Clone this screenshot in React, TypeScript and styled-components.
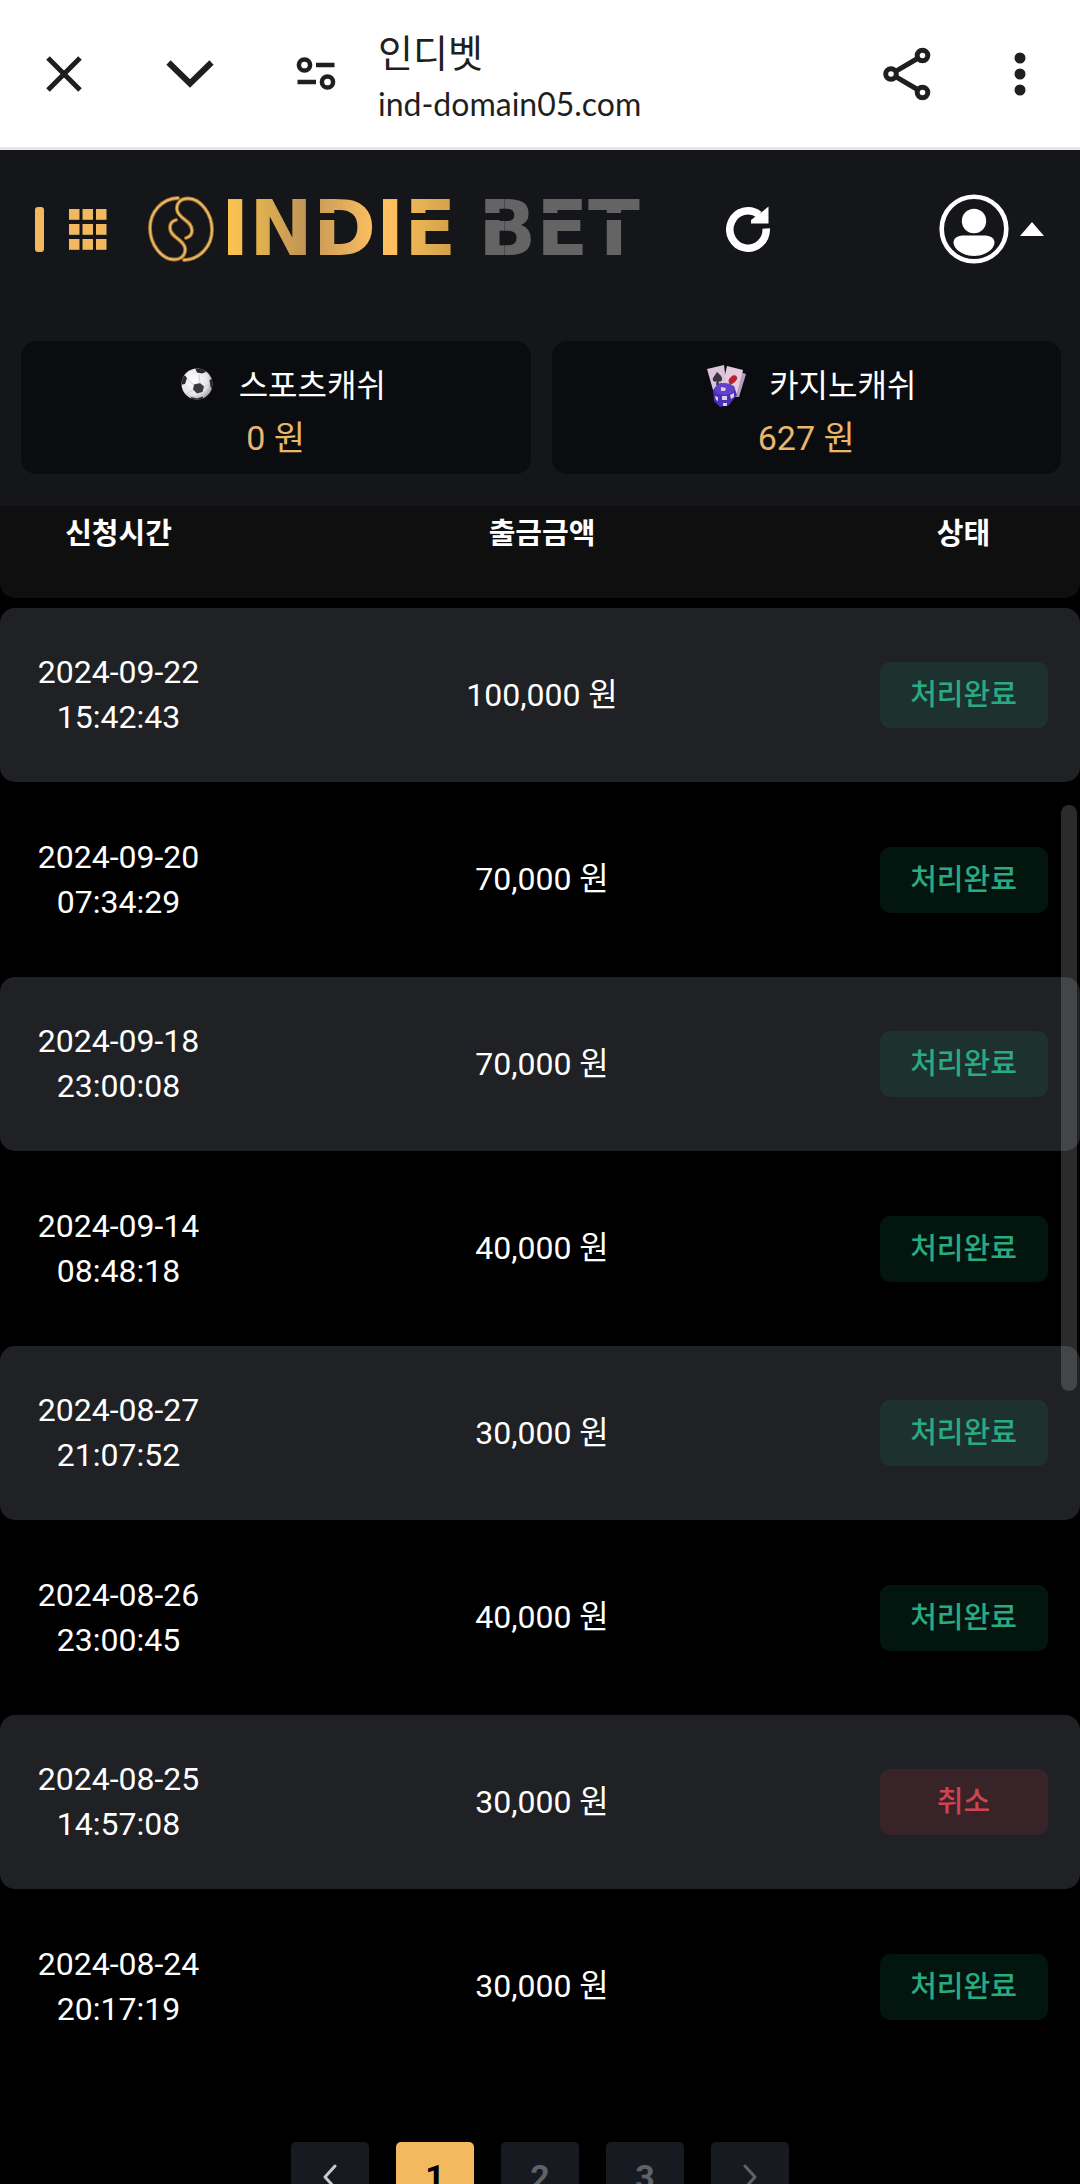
import React from "react";
import styled, { createGlobalStyle } from "styled-components";

const GlobalStyle = createGlobalStyle`
  *, *::before, *::after { box-sizing: border-box; }
  body {
    margin: 0;
    background: #000;
    color: #fff;
    font-family: Roboto, "Noto Sans CJK KR", sans-serif;
  }
  button {
    margin: 0;
    padding: 0;
    border: 0;
    background: none;
    color: inherit;
    font: inherit;
    cursor: pointer;
  }
  svg { display: block; flex: none; }
`;

const Screen = styled.div`
  position: relative;
  display: flex;
  flex-direction: column;
  height: 100vh;
  overflow: hidden;
`;

/* ---------- browser tab bar ---------- */

const TabBar = styled.header`
  display: flex;
  flex: none;
  align-items: center;
  height: 150px;
  padding: 0 24px 0 28px;
  background: #fff;
  border-bottom: 3px solid #e5e6e6;
  color: #1f1f1f;
`;

const BarButton = styled.button<{ $w: number }>`
  display: flex;
  flex: none;
  align-items: center;
  justify-content: center;
  width: ${(p) => p.$w}px;
  height: 72px;
`;

const PageInfo = styled.div`
  display: flex;
  flex: 1;
  flex-direction: column;
  min-width: 0;
  padding: 8px 0 0 26px;
`;

const PageTitle = styled.span`
  font-size: 38px;
  line-height: 52px;
`;

const PageUrl = styled.span`
  font-family: Lato, sans-serif;
  font-size: 32px;
  line-height: 48px;
`;

/* ---------- site header ---------- */

const SiteHeader = styled.header`
  flex: none;
  padding: 34px 19px 32px 21px;
  background: #15161a;
`;

const Toolbar = styled.div`
  display: flex;
  align-items: center;
  height: 90px;
  padding: 0 17px 0 14px;
  margin-bottom: 67px;
`;

const MenuButton = styled.button`
  display: flex;
  align-items: center;
  gap: 25px;
  color: #f1b85f;
`;

const MenuMark = styled.span`
  width: 9px;
  height: 45px;
  border-radius: 3px;
  background: currentColor;
`;

const Brand = styled.a`
  display: flex;
  align-items: center;
  margin-left: 41px;
  color: inherit;
  text-decoration: none;
`;

const Word = styled.span<{ $before: number }>`
  display: flex;
  margin-left: ${(p) => p.$before}px;
  font-family: "DejaVu Sans", sans-serif;
  font-size: 76px;
  font-weight: 700;
  line-height: 84px;
`;

const slot = "linear-gradient(#000 0 26px, transparent 26px 33px, #000 33px)";
const masks = {
  none: "none",
  full: slot,
  left: `${slot} left / 46% 100% no-repeat, linear-gradient(#000, #000) right / 54% 100% no-repeat`,
};

const Letter = styled.span<{ $from: string; $to: string; $cut: keyof typeof masks }>`
  background: linear-gradient(90deg, ${(p) => p.$from}, ${(p) => p.$to});
  background-clip: text;
  color: transparent;
  mask: ${(p) => masks[p.$cut]};
`;

const RefreshButton = styled.button`
  margin-left: 86px;
`;

const AccountButton = styled.button`
  display: flex;
  align-items: center;
  gap: 11px;
  margin-left: auto;
`;

const CashRow = styled.div`
  display: grid;
  grid-template-columns: 1fr 1fr;
  gap: 21px;
`;

const CashCard = styled.section`
  display: flex;
  flex-direction: column;
  align-items: center;
  padding: 19px 0 10px;
  border-radius: 15px;
  background: #0b0c0f;
  line-height: 52px;
`;

const CashTitle = styled.h2`
  display: flex;
  align-items: center;
  gap: 11px;
  height: 52px;
  margin: 0;
  font-size: 32px;
  font-weight: 400;
`;

const CashAmount = styled.span`
  height: 52px;
  color: #e8b76c;
  font-size: 34px;
`;

/* ---------- history list ---------- */

const Content = styled.main`
  flex: 1;
  min-height: 0;
  overflow-y: auto;
  scrollbar-width: none;
`;

const History = styled.table`
  display: flex;
  flex-direction: column;
  gap: 10px;
`;

const Head = styled.thead`
  display: block;
  padding: 6px 0 42px;
  border-radius: 0 0 15px 15px;
  background: #0f0f0f;
`;

const Body = styled.tbody`
  display: grid;
  gap: 10px;
`;

const Row = styled.tr`
  display: grid;
  grid-template-columns: 237px 1fr 233px;
  align-items: center;
`;

const HeadCell = styled.th`
  padding: 0;
  font-size: 29px;
  font-weight: 700;
  line-height: 44px;
  text-align: center;
`;

const EntryRow = styled(Row)`
  height: 175px;
  border-radius: 15px;
  &:nth-child(odd) {
    height: 174px;
    background: #202125;
  }
`;

const Cell = styled.td`
  display: flex;
  justify-content: center;
  padding: 0;
  font-size: 32px;
  line-height: 45px;
  text-align: center;
`;

const Stamp = styled.time`
  display: flex;
  flex-direction: column;
`;

const Status = styled.span<{ $cancelled: boolean }>`
  width: 168px;
  height: 66px;
  border-radius: 10px;
  background: ${(p) => (p.$cancelled ? "rgba(220, 53, 69, 0.12)" : "rgba(15, 160, 110, 0.13)")};
  color: ${(p) => (p.$cancelled ? "#cf4450" : "#2aaa82")};
  font-size: 29px;
  font-weight: 500;
  line-height: 66px;
`;

const Pagination = styled.nav`
  display: flex;
  justify-content: center;
  gap: 27px;
  padding: 68px 0;
`;

const PageButton = styled.button<{ $tone: "active" | "bright" | "dim" }>`
  display: flex;
  align-items: center;
  justify-content: center;
  width: 78px;
  height: 70px;
  border-radius: 5px;
  background: ${(p) => (p.$tone === "active" ? "#f2b95e" : "#171a20")};
  color: ${(p) => ({ active: "#000", bright: "#c8cad2", dim: "#606266" })[p.$tone]};
  font-size: 34px;
  font-weight: 700;
`;

const ScrollThumb = styled.div`
  position: absolute;
  top: 805px;
  right: 3px;
  width: 16px;
  height: 586px;
  border-radius: 8px;
  background: rgba(215, 215, 220, 0.2);
`;

/* ---------- drawings ---------- */

const CloseIcon = () => (
  <svg width="36" height="36" viewBox="0 0 36 36" fill="none" stroke="currentColor" strokeWidth="5">
    <path d="M2 2 34 34M34 2 2 34" />
  </svg>
);

const DownIcon = () => (
  <svg width="48" height="28" viewBox="0 0 48 28" fill="none" stroke="currentColor" strokeWidth="6">
    <path d="M2.5 2.500 24 23.500 45.500 2.500" />
  </svg>
);

const TuneIcon = () => (
  <svg width="40" height="34" viewBox="0 0 40 34" fill="none" stroke="currentColor" strokeWidth="4.500">
    <circle cx="8.500" cy="8" r="5.600" />
    <path d="M20 8H38.500M1.500 25H20" />
    <circle cx="31.500" cy="25" r="5.600" />
  </svg>
);

const ShareIcon = () => (
  <svg width="48" height="54" viewBox="0 0 48 54" fill="none" stroke="currentColor" strokeWidth="5">
    <circle cx="8" cy="27" r="5.300" />
    <circle cx="39.500" cy="8.500" r="5.300" />
    <circle cx="39.500" cy="45.500" r="5.300" />
    <path d="M13 24.200 34.500 11.500M13 29.800 34.500 42.500" />
  </svg>
);

const MoreIcon = () => (
  <svg width="12" height="44" viewBox="0 0 12 44" fill="currentColor">
    <circle cx="6" cy="6" r="5.500" />
    <circle cx="6" cy="22" r="5.500" />
    <circle cx="6" cy="38" r="5.500" />
  </svg>
);

const GridIcon = () => (
  <svg width="38" height="41" viewBox="0 0 38 41" fill="currentColor">
    {[0, 15, 30].map((y) =>
      [0, 13.5, 27].map((x) => <rect key={`${x}-${y}`} x={x} y={y} width="10.500" height="10.800" />)
    )}
  </svg>
);

const swirl =
  "M30 2C14 2.500 2 16 2 32C2 49 14 63.500 26 63.500C34 63.500 38 58 37 52C35.500 43 22 41.500 22 31.500C22 27.500 24.500 25 28 24";

const Emblem = () => (
  <svg width="66" height="66" viewBox="0 0 66 66" fill="none" strokeLinecap="round">
    {[0, 180].map((turn) => (
      <g key={turn} transform={`rotate(${turn} 33 33)`}>
        <path d={swirl} stroke="#a8742a" strokeWidth="3.800" />
        <path d={swirl} stroke="#e6bd70" strokeWidth="1.800" />
      </g>
    ))}
  </svg>
);

const RefreshIcon = () => (
  <svg width="44" height="46" viewBox="0 0 44 46" fill="none">
    <path d="M40.200 22.500A18.200 18.700 0 1 1 33 8.600" stroke="#fff" strokeWidth="7.500" />
    <path d="M42.500 0.500V17.500H25V14L31 9.500L36.500 5.500Z" fill="#fff" />
  </svg>
);

const UserIcon = () => (
  <svg width="70" height="70" viewBox="0 0 70 70" fill="#fff">
    <circle cx="35" cy="35" r="32.300" fill="none" stroke="#fff" strokeWidth="4.600" />
    <circle cx="35" cy="27" r="12.200" />
    <path d="M25 41.500H45C51 41.500 55.500 44 55.500 48.500C55.500 54.500 47 62 35 62C23 62 14.500 54.500 14.500 48.500C14.500 44 19 41.500 25 41.500Z" />
  </svg>
);

const CaretIcon = () => (
  <svg width="24" height="14" viewBox="0 0 24 14" fill="#fff">
    <path d="M12 0 24 14H0Z" />
  </svg>
);

const BallIcon = () => (
  <svg width="62" height="46" viewBox="0 0 62 46">
    <defs>
      <radialGradient id="ball" cx="0.4" cy="0.4" r="0.7">
        <stop offset="0" stopColor="#fff" />
        <stop offset="0.65" stopColor="#e6e3e8" />
        <stop offset="1" stopColor="#8a888e" />
      </radialGradient>
      <clipPath id="ballEdge">
        <circle cx="31" cy="21" r="15.500" />
      </clipPath>
    </defs>
    <circle cx="31" cy="21" r="15.500" fill="url(#ball)" />
    <g clipPath="url(#ballEdge)">
      <path d="M29 5H38L40 9L36 10.500L31 9.500ZM14 14L19 12.500L21 15L19 21L14 22ZM43.500 17L48 15V27L44.500 24ZM25 34L31 35.500L37 33.500V38H25Z" fill="#29292c" />
      <path d="M28 21.500L34 20L38 23.500L36.500 29L31 30.500L27 26.500Z" fill="#3b3b3f" />
      <path d="M33 11 34 20.500M21 16 28 22M38 24 43 21M36 30 38 34M27 27 20 31" stroke="#cfcdd3" fill="none" />
    </g>
  </svg>
);

const CardsIcon = () => (
  <svg width="62" height="46" viewBox="0 0 62 46">
    <path d="M35 6 50 11 43 34 30 33Z" fill="#b79dbd" />
    <path d="M31 3 47 7 40 34 25 30Z" fill="#e3cbe0" />
    <path d="M11 6 28 2 31 26 19 34Z" fill="#dbc3da" />
    <path d="M21 9C24 12 27 14 26 17C25 19 23 19 22.500 18L23 22H20L20.500 18C18 20 16 17 17 15Z" fill="#39343d" />
    <path d="M35 14C37 11 42 12 41 16C40 19 36 21 34 22C33 20 32 18 33 16Z" fill="#c01d2d" />
    <path d="M17 27 24 20 38 23 41 32 33 42 24 44 18 38Z" fill="#4d2fb4" />
    <ellipse cx="28.500" cy="26" rx="10" ry="6" fill="#5f42c8" />
    <path d="M25 24 30 25 29 28 25 28ZM26 33H31V37H26ZM34 32 38 30V34L35 36ZM19 33 22 34V38L20 37ZM27 40H31V43H27Z" fill="#d8cdf0" />
  </svg>
);

const PagerIcon = ({ next = false }: { next?: boolean }) => (
  <svg width="16" height="26" viewBox="0 0 16 26" fill="none" stroke="currentColor" strokeWidth="3" strokeLinecap="round" strokeLinejoin="round">
    <path d={next ? "M3 2 13 13 3 24" : "M13 2 3 13 13 24"} />
  </svg>
);

/* ---------- data ---------- */

const indie = [
  { ch: "I", from: "#fcc651", to: "#f2bb4e", cut: "none" },
  { ch: "N", from: "#e8b64e", to: "#bb9156", cut: "none" },
  { ch: "D", from: "#c99a55", to: "#fdc062", cut: "left" },
  { ch: "I", from: "#ffc062", to: "#fbbc5e", cut: "none" },
  { ch: "E", from: "#f5b95a", to: "#cd9f47", cut: "full" },
] as const;

const bet = [
  { ch: "B", cut: "left" },
  { ch: "E", cut: "full" },
  { ch: "T", cut: "full" },
] as const;

const entries = [
  ["2024-09-22", "15:42:43", "100,000", "처리완료"],
  ["2024-09-20", "07:34:29", "70,000", "처리완료"],
  ["2024-09-18", "23:00:08", "70,000", "처리완료"],
  ["2024-09-14", "08:48:18", "40,000", "처리완료"],
  ["2024-08-27", "21:07:52", "30,000", "처리완료"],
  ["2024-08-26", "23:00:45", "40,000", "처리완료"],
  ["2024-08-25", "14:57:08", "30,000", "취소"],
  ["2024-08-24", "20:17:19", "30,000", "처리완료"],
];

export default function App() {
  return (
    <Screen>
      <GlobalStyle />
      <TabBar>
        <BarButton $w={72} aria-label="닫기"><CloseIcon /></BarButton>
        <BarButton $w={180} aria-label="최소화"><DownIcon /></BarButton>
        <BarButton $w={72} aria-label="사이트 정보"><TuneIcon /></BarButton>
        <PageInfo>
          <PageTitle>인디벳</PageTitle>
          <PageUrl>ind-domain05.com</PageUrl>
        </PageInfo>
        <BarButton $w={154} aria-label="공유"><ShareIcon /></BarButton>
        <BarButton $w={72} aria-label="더보기"><MoreIcon /></BarButton>
      </TabBar>

      <SiteHeader>
        <Toolbar>
          <MenuButton aria-label="메뉴">
            <MenuMark />
            <GridIcon />
          </MenuButton>
          <Brand href="#">
            <Emblem />
            <Word $before={7}>
              {indie.map((l, i) => (
                <Letter key={i} $from={l.from} $to={l.to} $cut={l.cut}>{l.ch}</Letter>
              ))}
            </Word>
            <Word $before={22}>
              {bet.map((l) => (
                <Letter key={l.ch} $from="#646464" $to="#646464" $cut={l.cut}>{l.ch}</Letter>
              ))}
            </Word>
          </Brand>
          <RefreshButton aria-label="새로고침"><RefreshIcon /></RefreshButton>
          <AccountButton aria-label="내 계정">
            <UserIcon />
            <CaretIcon />
          </AccountButton>
        </Toolbar>
        <CashRow>
          <CashCard>
            <CashTitle><BallIcon />스포츠캐쉬</CashTitle>
            <CashAmount>0 원</CashAmount>
          </CashCard>
          <CashCard>
            <CashTitle><CardsIcon />카지노캐쉬</CashTitle>
            <CashAmount>627 원</CashAmount>
          </CashCard>
        </CashRow>
      </SiteHeader>

      <Content>
        <History>
          <Head>
            <Row>
              <HeadCell scope="col">신청시간</HeadCell>
              <HeadCell scope="col">출금금액</HeadCell>
              <HeadCell scope="col">상태</HeadCell>
            </Row>
          </Head>
          <Body>
            {entries.map(([date, time, amount, status]) => (
              <EntryRow key={date}>
                <Cell>
                  <Stamp dateTime={`${date}T${time}`}>
                    <span>{date}</span>
                    <span>{time}</span>
                  </Stamp>
                </Cell>
                <Cell>{amount} 원</Cell>
                <Cell><Status $cancelled={status === "취소"}>{status}</Status></Cell>
              </EntryRow>
            ))}
          </Body>
        </History>
        <Pagination aria-label="페이지">
          <PageButton $tone="bright" aria-label="이전"><PagerIcon /></PageButton>
          <PageButton $tone="active" aria-current="page">1</PageButton>
          <PageButton $tone="dim">2</PageButton>
          <PageButton $tone="dim">3</PageButton>
          <PageButton $tone="dim" aria-label="다음"><PagerIcon next /></PageButton>
        </Pagination>
      </Content>
      <ScrollThumb />
    </Screen>
  );
}
